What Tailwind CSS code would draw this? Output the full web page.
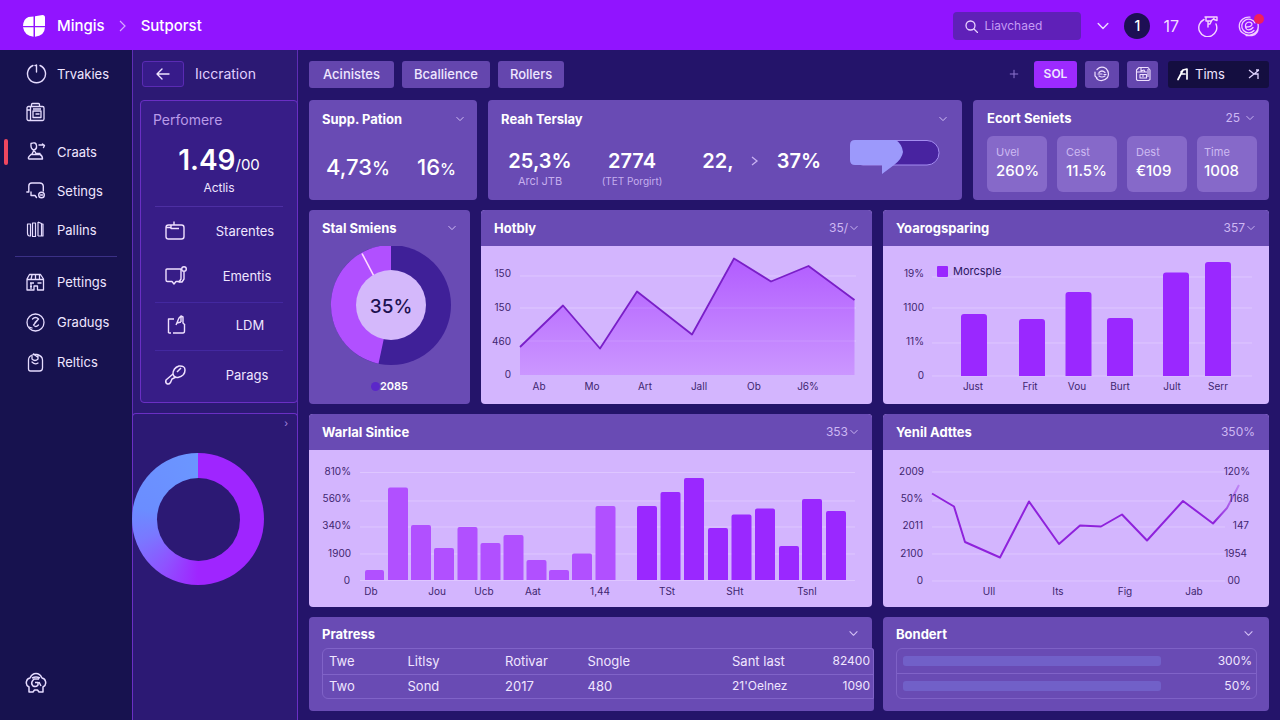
<!DOCTYPE html>
<html lang="en">
<head>
<meta charset="utf-8">
<meta name="viewport" content="width=device-width, initial-scale=1">
<title>Mingis – Sutporst</title>
<script src="https://cdn.jsdelivr.net/npm/@tailwindcss/browser@4"></script>
</head>
<body class="flex min-h-screen flex-col bg-[#24146a] font-['Inter','Noto_Sans',sans-serif] text-[13px] leading-4 text-[#efe6ff]">
<svg class="hidden" aria-hidden="true">
  <symbol id="down" viewBox="0 0 10 10"><path d="M1 3l4 4 4-4" fill="none" stroke="currentColor" stroke-width="1.2" stroke-linecap="round" stroke-linejoin="round"/></symbol>
</svg>

<header class="flex h-[50px] shrink-0 items-center bg-[#9114ff] pt-0.5 pr-5 pl-[23px]">
  <svg class="size-[23px]" viewBox="0 0 23 23" fill="#fff" aria-hidden="true">
    <path d="M10.500 1.500V11H0Q.5 3.500 5.500 2Z"/><path d="M12 1.200L19.500 0Q22 0 22 2.500V11H12Z"/><path d="M0 12.300H10.500V21.800Q1.500 21 0 12.300Z"/><path d="M12 12.300H22Q21.500 21 12 21.800Z"/>
  </svg>
  <nav class="ml-[11px] flex items-center text-[15px] font-medium leading-5 text-white" aria-label="Breadcrumb">
    <a href="#">Mingis</a>
    <svg class="mx-[14px] h-3 w-2" viewBox="0 0 8 12" fill="none" stroke="#d7a8ff" stroke-width="1.200"><path d="M1 1l5 5-5 5"/></svg>
    <a href="#">Sutporst</a>
  </nav>
  <label class="ml-auto flex h-7 w-32 items-center gap-1.5 rounded-[4px] bg-[#5f20b8] pl-3">
    <svg class="size-[13px] shrink-0" viewBox="0 0 13 13" fill="none" stroke="#e8d2ff" stroke-width="1.300" stroke-linecap="round"><circle cx="5.500" cy="5.500" r="4.500"/><path d="M9 9l3.500 3.500"/></svg>
    <input type="search" aria-label="Search" placeholder="Liavchaed" class="w-full min-w-0 bg-transparent text-xs text-white placeholder:text-[#c59bf5] focus:outline-none">
  </label>
  <button class="ml-4 text-[#ecd9ff]" aria-label="More"><svg class="size-3"><use href="#down"/></svg></button>
  <button class="ml-[15px] size-[26px] rounded-full bg-[#1d0f54] text-sm font-medium text-white">1</button>
  <span class="ml-[13px] text-base text-[#f3dcff]">17</span>
  <button class="ml-[18px]" aria-label="Timer">
    <svg class="size-[22px]" viewBox="0 0 22 22" fill="none" stroke="#f6d4ff" stroke-width="1.400" stroke-linecap="round" stroke-linejoin="round"><path d="M7 4.500A9 9 0 1 0 19 9"/><path d="M8 2h12v3.500l-3-1M9 2v4h5l3-2.500M11 6v6M15 5l-2 4h-2"/></svg>
  </button>
  <button class="relative ml-[19px]" aria-label="Notifications">
    <svg class="size-[22px]" viewBox="0 0 22 22" fill="none" stroke="#f3ccff" stroke-width="1.300" stroke-linecap="round"><path d="M12 2.200A9.500 9 0 1 0 20 9M20 9q1.500 10-6 11.500H8"/><path d="M17 8A7 6.800 0 1 0 16 15.500M8 12q6 0 6-3c-1-3.500-7-2-6.500 2.500s5 4 7.500 1"/></svg>
    <span class="absolute -top-px -right-1 size-[10px] rounded-full bg-[#f0205c]"></span>
  </button>
</header>

<div class="flex flex-1">
  <aside class="flex w-[132px] shrink-0 flex-col bg-[#17124f] pt-1 pb-[26px]">
    <nav class="flex flex-col" aria-label="Main">
      <a href="#" class="flex h-[39px] items-center gap-[10px] pl-[26px]">
        <svg class="size-[21px] shrink-0" viewBox="0 0 21 21" fill="none" stroke="#e6dcff" stroke-width="1.400" stroke-linecap="round"><path d="M7 2.500A9 9 0 1 0 14 2.500M10.500 2v7M9 2.500h1.500"/></svg>Trvakies</a>
      <a href="#" class="flex h-[39px] items-center gap-[10px] pl-[26px]" aria-label="Documents">
        <svg class="size-[21px] shrink-0" viewBox="0 0 21 21" fill="none" stroke="#e6dcff" stroke-width="1.300" stroke-linejoin="round"><rect x="1" y="4.500" width="17" height="14" rx="1.500"/><path d="M5.500 4.500v-2q0-1 1-1h6q1 0 1 1v2M4.500 4.500v14M7 9h8v6.500H7zM7 7h8M9.500 12h4M1 8h3.500"/></svg></a>
      <a href="#" class="relative flex h-[39px] items-center gap-[10px] pl-[26px]" aria-current="page">
        <span class="absolute left-1 h-[26px] w-[4px] rounded-[2px] bg-[#f0475f]"></span>
        <svg class="size-[21px] shrink-0" viewBox="0 0 21 21" fill="none" stroke="#e6dcff" stroke-width="1.400" stroke-linecap="round" stroke-linejoin="round"><path d="M5 2.500q5-2 5.500 2t-3 4.500q-3-1-2.500-6.500zM8 9l-2 4M8 9l2 3.500h4M5 13.500h9q2.500 1 2.500 4.500H3q-2-1 2-4.500zM13 4h5M16.500 3l2 1.500-1 2"/></svg>Craats</a>
      <a href="#" class="flex h-[39px] items-center gap-[10px] pl-[26px]">
        <svg class="size-[21px] shrink-0" viewBox="0 0 21 21" fill="none" stroke="#e6dcff" stroke-width="1.400" stroke-linecap="round" stroke-linejoin="round"><path d="M.8 12h2V6q0-3 3-3h8q3 0 3.500 3v5M5 12v3.500H9l1.500 2"/><circle cx="15.500" cy="15" r="2.800"/><path d="M14.500 15h2"/></svg>Setings</a>
      <a href="#" class="flex h-[39px] items-center gap-[10px] pl-[26px]">
        <svg class="size-[21px] shrink-0" viewBox="0 0 21 21" fill="none" stroke="#e6dcff" stroke-width="1.200" stroke-linejoin="round"><path d="M1.500 5h3v12H3.500q-2 0-2-3zM6.500 4H9.500v13.500H6.500zM12 3l3.500 1.500V17H12M12 3v14M15.500 5h1.500v12h-1.500"/></svg>Pallins</a>
      <hr class="mx-[15px] mt-[7px] mb-[5px] border-[#3b3086]">
      <a href="#" class="flex h-10 items-center gap-[10px] pl-[26px]">
        <svg class="size-[21px] shrink-0" viewBox="0 0 21 21" fill="none" stroke="#e6dcff" stroke-width="1.300" stroke-linejoin="round"><path d="M1 7l2.500-4.500h11L17.500 7v11h-6v-4H8v4H1zM1 7.500h16M6 3L5 7.500M9.500 2.500v5M13.500 3v4.500M4 11h4M11.500 11h4M4 14.500h2M5 11v6"/></svg>Pettings</a>
      <a href="#" class="flex h-10 items-center gap-[10px] pl-[26px]">
        <svg class="size-[21px] shrink-0" viewBox="0 0 21 21" fill="none" stroke="#e6dcff" stroke-width="1.300" stroke-linecap="round"><circle cx="9.500" cy="10.500" r="8.500"/><path d="M6.500 7q3-3 6 0l-5 6q2 3 5 0M12 7.500l-3 3M3 15l3 1"/></svg>Gradugs</a>
      <a href="#" class="flex h-10 items-center gap-[10px] pl-[26px]">
        <svg class="size-[21px] shrink-0" viewBox="0 0 21 21" fill="none" stroke="#e6dcff" stroke-width="1.300" stroke-linecap="round" stroke-linejoin="round"><path d="M2.500 17V8q0-4 5-5.500h3.500Q16.500 4 16.500 8v8q0 3-3 3H4.500q-2 0-2-2z"/><path d="M6 4v3q3 3 6 0V3M6 10q3 3 6 1M7.500 2l4 3"/></svg>Reltics</a>
    </nav>
    <button class="mt-auto ml-[25px] self-start" aria-label="Account">
      <svg class="size-[22px]" viewBox="0 0 22 22" fill="none" stroke="#e6dcff" stroke-width="1.500" stroke-linejoin="round"><path d="M4 20v-5Q.5 13 1.500 9.500 2 6.500 5 6 7 1.500 11 1.500T17 6q3 .5 3.500 3.500Q21.500 13 18 15v5h-4l-1.500-2h-3L8 20z"/><path d="M14 7H9q-4 4-1 7 3 1.500 5-1v-2.500h-3M14 10l2 4M7 6q4-2 8 0"/></svg>
    </button>
  </aside>

  <section class="flex w-[166px] shrink-0 flex-col border-x border-[#5f2db5] bg-[#2c1974]" aria-label="Overview">
    <div class="flex h-[50px] items-center gap-[11px] pb-0.5 pl-[9px]">
      <button class="flex h-[26px] w-[42px] items-center justify-center rounded-[3px] border border-[#5a2bb4] bg-[#371b8a]" aria-label="Back">
        <svg class="h-3 w-4" viewBox="0 0 16 12" fill="none" stroke="#efe6ff" stroke-width="1.400" stroke-linecap="round" stroke-linejoin="round"><path d="M14 6H2M7 1L2 6l5 5"/></svg>
      </button>
      <span class="text-sm leading-4 text-[#e0d0ff]">Iıccration</span>
    </div>
    <div class="-mr-px ml-[7px] flex flex-col rounded-[4px] border border-[#6a2fc4] bg-[#371d87] px-[14px] pb-1">
      <h2 class="-ml-0.5 pt-[11px] text-sm leading-4 text-[#b99ae8]">Perfomere</h2>
      <p class="mt-4 flex items-baseline justify-center text-white"><span class="text-[28px] font-semibold leading-8">1.49</span><span class="text-[15px]">/00</span></p>
      <p class="mt-1 mb-[10px] text-center text-xs leading-4">Actlis</p>
      <ul class="flex flex-col">
        <li class="flex h-12 items-center border-t border-[#4d2fa3]">
          <svg class="ml-2 size-6" viewBox="0 0 24 24" fill="none" stroke="#efe0ff" stroke-width="1.400" stroke-linejoin="round"><rect x="3" y="6" width="18" height="14" rx="2.500"/><path d="M8 6v3.500h8M11 6V2.500M3 8.500h5"/></svg>
          <span class="flex-1 pl-5 text-center">Starentes</span></li>
        <li class="flex h-12 items-center pb-1">
          <svg class="ml-2 size-6" viewBox="0 0 24 24" fill="none" stroke="#efe0ff" stroke-width="1.400" stroke-linejoin="round"><path d="M18 5H4q-1 0-1 1v10q0 1.500 1.500 1.500H9l2 2.500 2-2.500h4"/><circle cx="21" cy="5" r="2.300"/><path d="M18 5v10l-2 3h3l2-3V8"/></svg>
          <span class="flex-1 pl-6 text-center">Ementis</span></li>
        <li class="flex h-12 items-center border-t border-[#4328a0] pb-1">
          <svg class="ml-2 size-6" viewBox="0 0 24 24" fill="none" stroke="#efe0ff" stroke-width="1.400" stroke-linejoin="round"><path d="M11 6H5.500v14M5.500 20H8M10 20h10q1.500 0 1.500-2v-7M13 12l3-7 2-2 2 1v6l2 2M14 10l4-1M18 4v5"/></svg>
          <span class="flex-1 pl-[30px] text-center">LDM</span></li>
        <li class="flex h-12 items-center border-t border-[#4328a0]">
          <svg class="ml-2 size-6" viewBox="0 0 24 24" fill="none" stroke="#efe0ff" stroke-width="1.500" stroke-linejoin="round"><path d="M10 11q0-6 6-8 6-.5 6 4 0 6-7 7.500-4 .5-5-3.500z"/><path d="M10 11l-7 6q-1 3 1.500 4 1.500.5 3-1.500L9 16l4-2M14 9l4-4"/></svg>
          <span class="flex-1 pl-6 text-center">Parags</span></li>
      </ul>
    </div>
    <div class="-mx-px mt-[10px] flex flex-1 flex-col rounded-t-[4px] border border-b-0 border-[#6a2fc4] bg-[#2c1974]">
      <button class="mt-[3px] mr-[9px] self-end text-[10px] leading-3 text-[#a98ae0]" aria-label="Open chart">›</button>
      <div class="mt-6 -ml-px flex size-[132px] items-center justify-center rounded-full bg-[conic-gradient(#9f25ff_0deg,#9f25ff_180deg,#8f52ff_215deg,#7a78ff_250deg,#6b8dff_280deg,#6b96ff_360deg)]" role="img" aria-label="Ring chart">
        <div class="size-[83px] rounded-full bg-[#2c1974]"></div>
      </div>
    </div>
  </section>

  <main class="flex min-w-0 flex-1 flex-col gap-[10px] pr-[11px] pb-[9px] pl-[11px]">
    <div class="-mb-[10px] flex h-[50px] items-center pb-0.5">
      <div class="flex gap-2">
        <button class="h-[27px] rounded-[3px] bg-[#6446ae] px-[14px] font-medium">Acinistes</button>
        <button class="h-[27px] rounded-[3px] bg-[#6446ae] px-3 font-medium">Bcallience</button>
        <button class="h-[27px] rounded-[3px] bg-[#6446ae] px-3 font-medium">Rollers</button>
      </div>
      <div class="ml-auto flex items-center gap-2">
        <button class="mr-[7px] text-[#8d75cf]" aria-label="Add"><svg class="size-[10px]" viewBox="0 0 12 12" fill="none" stroke="currentColor" stroke-width="1.200"><path d="M6 1v10M1 6h10"/></svg></button>
        <button class="h-[27px] w-[43px] rounded-[3px] bg-[#9d2aff] text-xs font-semibold">SOL</button>
        <button class="flex h-[27px] w-[34px] items-center justify-center rounded-[3px] bg-[#6446ae]" aria-label="History">
          <svg class="size-4" viewBox="0 0 16 16" fill="none" stroke="#efe0ff" stroke-width="1.200" stroke-linecap="round"><path d="M3 3.500q4-4 9-1 4 4 1.500 9-4 4.500-9 2.500l-2-1.500M1 6v4l2 2"/><path d="M5 6.500q3-3 6 0M5 10q3 2 6 0M4 8h4M10 8.500h2"/></svg></button>
        <button class="flex h-[27px] w-[31px] items-center justify-center rounded-[3px] bg-[#6446ae]" aria-label="Save">
          <svg class="size-4" viewBox="0 0 16 16" fill="none" stroke="#efe0ff" stroke-width="1.100" stroke-linejoin="round"><path d="M4 1.500h9L15 4v9.500l-1.500 1H2.500l-1-1V4zM1.500 6H12M6 2v3l3-1 1 2M5 8.500h6.500V12H5zM8 8.500V11M13 3v8"/></svg></button>
        <button class="ml-0.5 flex h-[27px] w-[101px] items-center rounded-[3px] bg-[#140e40] px-[9px]">
          <svg class="mr-1.5 h-3.5 w-3" viewBox="0 0 12 14" fill="none" stroke="#fff" stroke-width="1.700" stroke-linecap="round" stroke-linejoin="round"><path d="M1 12.500L6 3l4-1v10M4 7h4M6 3L4 5"/></svg>
          Tims
          <svg class="ml-auto size-3" viewBox="0 0 12 12" fill="none" stroke="#e0d4ff" stroke-width="1.300"><path d="M1 2l5 4-5 4M11 2L6 6h4v5M11 2H8"/></svg>
        </button>
      </div>
    </div>

    <div class="grid grid-cols-[168fr_474fr_296fr] gap-x-[11px]">
      <section class="h-[100px] rounded-[4px] bg-[#694bb4] px-[13px] text-white">
        <div class="flex h-[38px] items-center justify-between"><h2 class="font-bold">Supp. Pation</h2><button class="text-[#d5c2f7]" aria-label="Expand"><svg class="size-2"><use href="#down"/></svg></button></div>
        <div class="mt-[13px] flex items-baseline justify-between pr-2 pl-1 text-[22px] font-medium leading-8"><span>4,73<span class="text-lg">%</span></span><span>16<span class="text-base">%</span></span></div>
      </section>
      <section class="h-[100px] rounded-[4px] bg-[#694bb4] text-white">
        <div class="flex h-[38px] items-center justify-between pr-[15px] pl-[13px]"><h2 class="font-bold">Reah Terslay</h2><button class="text-[#d5c2f7]" aria-label="Expand"><svg class="size-2"><use href="#down"/></svg></button></div>
        <div class="grid grid-cols-[104fr_80fr_20fr_52fr_22fr_66fr_18fr_90fr_22fr] text-center text-xl font-semibold leading-6">
          <div class="pt-[11px]">25,3%<p class="text-[11px] font-normal leading-4 text-[#c6afee]">Arcl JTB</p></div>
          <div class="pt-[11px]">2774<p class="text-[10px] font-normal leading-4 whitespace-nowrap text-[#c6afee]">(TET Porgirt)</p></div>
          <div></div>
          <div class="pt-[11px]">22,</div>
          <svg class="mt-[17px] h-3 w-2 justify-self-center" viewBox="0 0 8 12" fill="none" stroke="#c9b2f2" stroke-width="1.300"><path d="M1 2l5 4-5 4"/></svg>
          <div class="pt-[11px]">37%</div>
          <div></div>
          <svg class="mt-0.5 h-auto w-full" viewBox="0 0 90 34" role="img" aria-label="Progress"><rect x="1" y=".500" width="88" height="24.500" rx="12" fill="#4823a0" stroke="#a48df0"/><path d="M5 0h41q6 4 7 12-1 7-9 13L32 34V25H5Q0 25 0 20V5Q0 0 5 0z" fill="#9c99fb"/></svg>
          <div></div>
        </div>
      </section>
      <section class="h-[100px] rounded-[4px] bg-[#694bb4] pr-3 pl-[14px] text-white">
        <div class="flex h-9 items-center justify-between"><h2 class="font-bold">Ecort Seniets</h2><button class="flex items-center gap-1.5 pr-[3px] text-xs text-[#cdb8f3]">25<svg class="size-2"><use href="#down"/></svg></button></div>
        <dl class="grid grid-cols-4 gap-x-[10px]">
          <div class="h-14 rounded-[6px] bg-[#8669c9] pt-2 pl-[9px]"><dt class="text-[11px] leading-4 text-[#cdbaf2]">Uvel</dt><dd class="pt-px text-[15px] font-medium leading-5">260%</dd></div>
          <div class="h-14 rounded-[6px] bg-[#8669c9] pt-2 pl-[9px]"><dt class="text-[11px] leading-4 text-[#cdbaf2]">Cest</dt><dd class="pt-px text-[15px] font-medium leading-5">11.5%</dd></div>
          <div class="h-14 rounded-[6px] bg-[#8669c9] pt-2 pl-[9px]"><dt class="text-[11px] leading-4 text-[#cdbaf2]">Dest</dt><dd class="pt-px text-[15px] font-medium leading-5">€109</dd></div>
          <div class="h-14 rounded-[6px] bg-[#8669c9] pt-2 pl-[7px]"><dt class="text-[11px] leading-4 text-[#cdbaf2]">Time</dt><dd class="pt-px text-[15px] font-medium leading-5">1008</dd></div>
        </dl>
      </section>
    </div>

    <div class="grid grid-cols-[161fr_391fr_386fr] gap-x-[11px]">
      <section class="flex flex-col rounded-[4px] bg-[#694bb4] text-white">
        <div class="flex h-9 items-center justify-between pr-[14px] pl-[13px]"><h2 class="font-bold">Stal Smiens</h2><button class="text-[#d5c2f7]" aria-label="Expand"><svg class="size-2"><use href="#down"/></svg></button></div>
        <svg class="h-auto w-full" viewBox="309 246 161 120" role="img" aria-label="35%">
          <circle cx="391" cy="305" r="60" fill="#3f2098"/>
          <path d="M391 305V245A60 60 0 0 0 378.500 363.700Z" fill="#b150ff"/>
          <path d="M362 253.500L376 280" stroke="#ffdcff" stroke-width="1.600"/>
          <circle cx="391" cy="305" r="35" fill="#d4b8fb"/>
          <text x="391" y="313" text-anchor="middle" font-size="19" font-weight="500" fill="#1c1150">35%</text>
        </svg>
        <p class="mt-3 flex items-center justify-center text-[11px] font-semibold leading-4"><span class="size-[9px] rounded-full bg-[#5b27c9]"></span>2085</p>
      </section>

      <section class="overflow-hidden rounded-[4px] bg-[#d3b5fe]">
        <div class="flex h-9 items-center justify-between bg-[#694bb4] pr-[14px] pl-[13px] text-white"><h2 class="font-bold">Hotbly</h2><button class="flex items-center gap-0.5 text-xs text-[#cdb8f3]">35/<svg class="size-2"><use href="#down"/></svg></button></div>
        <svg class="h-auto w-full" viewBox="481 246 391 158" font-size="10" fill="#40256f" role="img" aria-label="Area chart">
          <defs><linearGradient id="area" x1="0" y1="0" x2="0" y2="1"><stop offset="0" stop-color="#b25cff"/><stop offset="1" stop-color="#cb97ff"/></linearGradient></defs>
          <path d="M520 276H856M520 308H856M520 341H856" stroke="#deC6ff"/>
          <path d="M520 347L563 305.500 600 348.500 637 291.500 692 334.500 734 258.500 771 281.500 808.500 266 854.500 300V375H520Z" fill="url(#area)"/>
          <path d="M520 308H856M520 341H856" stroke="#e0c8ff" stroke-opacity=".250"/>
          <path d="M520 347L563 305.500 600 348.500 637 291.500 692 334.500 734 258.500 771 281.500 808.500 266 854.500 300" fill="none" stroke="#7a1fc8" stroke-width="1.800" stroke-linejoin="round"/>
          <g text-anchor="end"><text x="511" y="277">150</text><text x="511" y="311">150</text><text x="511" y="345">460</text><text x="511" y="378">0</text></g>
          <g text-anchor="middle"><text x="539" y="390">Ab</text><text x="592" y="390">Mo</text><text x="645" y="390">Art</text><text x="699" y="390">Jall</text><text x="754" y="390">Ob</text><text x="808" y="390">J6%</text></g>
        </svg>
      </section>

      <section class="overflow-hidden rounded-[4px] bg-[#d3b5fe]">
        <div class="flex h-9 items-center justify-between bg-[#694bb4] pr-[14px] pl-[13px] text-white"><h2 class="font-bold">Yoarogsparing</h2><button class="flex items-center gap-0.5 text-xs text-[#cdb8f3]">357<svg class="size-2"><use href="#down"/></svg></button></div>
        <svg class="h-auto w-full" viewBox="883 246 386 156" font-size="10" fill="#40256f" role="img" aria-label="Bar chart">
          <path d="M932 277H1252M932 308H1252M932 343H1252M932 376H1252" stroke="#dec6ff"/>
          <g fill="#9a28ff"><rect x="937" y="266" width="11" height="11" rx="1"/>
          <path d="M961 376V317q0-3 3-3h20q3 0 3 3v59zM1019 376V322q0-3 3-3h20q3 0 3 3v54zM1065.500 376V295q0-3 3-3h20q3 0 3 3v81zM1107 376V321q0-3 3-3h20q3 0 3 3v55zM1163 376V275.500q0-3 3-3h20q3 0 3 3V376zM1205 376V265q0-3 3-3h20q3 0 3 3v111z"/></g>
          <text x="953" y="275" font-size="11" fill="#2a1560">Morcsple</text>
          <g text-anchor="end"><text x="924" y="277">19%</text><text x="924" y="311">1100</text><text x="924" y="345">11%</text><text x="924" y="379">0</text></g>
          <g text-anchor="middle"><text x="973" y="390">Just</text><text x="1030" y="390">Frit</text><text x="1077" y="390">Vou</text><text x="1120" y="390">Burt</text><text x="1172" y="390">Jult</text><text x="1218" y="390">Serr</text></g>
        </svg>
      </section>
    </div>

    <div class="grid grid-cols-[563fr_386fr] gap-x-[11px]">
      <section class="overflow-hidden rounded-[4px] bg-[#d3b5fe]">
        <div class="flex h-9 items-center justify-between bg-[#694bb4] pr-[14px] pl-[13px] text-white"><h2 class="font-bold">Warlal Sintice</h2><button class="flex items-center gap-0.5 text-xs text-[#cdb8f3]">353<svg class="size-2"><use href="#down"/></svg></button></div>
        <svg class="h-auto w-full" viewBox="309 450 563 157" font-size="10" fill="#40256f" role="img" aria-label="Bar chart">
          <path d="M360 472.500H855M360 501H855M360 527H855M360 554H855M360 580.500H855" stroke="#dec6ff"/>
          <path fill="#b150ff" d="M365 580V572q0-2 2-2h15q2 0 2 2v8zM388 580V489.500q0-2 2-2h16q2 0 2 2V580zM411 580V527q0-2 2-2h16q2 0 2 2v53zM434 580V550q0-2 2-2h16q2 0 2 2v30zM457.500 580V529q0-2 2-2h16q2 0 2 2v51zM480.500 580V545q0-2 2-2h16q2 0 2 2v35zM503.500 580V537q0-2 2-2h16q2 0 2 2v43zM526.500 580V562q0-2 2-2h16q2 0 2 2v18zM549 580V572q0-2 2-2h16q2 0 2 2v8zM572 580V555.500q0-2 2-2h16q2 0 2 2V580zM595.500 580V508q0-2 2-2h16q2 0 2 2v72z"/>
          <path fill="#9a28ff" d="M637 580V508q0-2 2-2h16q2 0 2 2v72zM660.500 580V494q0-2 2-2h16q2 0 2 2v86zM684 580V480q0-2 2-2h16q2 0 2 2V580zM708 580V530q0-2 2-2h16q2 0 2 2v50zM731.500 580V516.500q0-2 2-2h16q2 0 2 2V580zM755 580V510.500q0-2 2-2h16q2 0 2 2V580zM779 580V548q0-2 2-2h16q2 0 2 2v32zM802 580V501q0-2 2-2h16q2 0 2 2v79zM826 580V513q0-2 2-2h16q2 0 2 2v67z"/>
          <g text-anchor="end"><text x="351" y="475">810%</text><text x="351" y="502">560%</text><text x="351" y="529">340%</text><text x="351" y="557">1900</text><text x="350" y="584">0</text></g>
          <g text-anchor="middle"><text x="371" y="595">Db</text><text x="437" y="595">Jou</text><text x="484" y="595">Ucb</text><text x="533" y="595">Aat</text><text x="600" y="595">1,44</text><text x="667" y="595">TSt</text><text x="735" y="595">SHt</text><text x="807" y="595">Tsnl</text></g>
        </svg>
      </section>

      <section class="overflow-hidden rounded-[4px] bg-[#d3b5fe]">
        <div class="flex h-9 items-center justify-between bg-[#694bb4] pr-[14px] pl-[13px] text-white"><h2 class="font-bold">Yenil Adttes</h2><button class="text-xs text-[#cdb8f3]">350%</button></div>
        <svg class="h-auto w-full" viewBox="883 450 386 156" font-size="10" fill="#40256f" role="img" aria-label="Line chart">
          <defs><linearGradient id="fade" gradientUnits="userSpaceOnUse" x1="1215" y1="0" x2="1240" y2="0"><stop offset="0" stop-color="#8f22dc"/><stop offset="1" stop-color="#c08af5"/></linearGradient></defs>
          <path d="M932 472H1225M932 501H1225M932 527H1225M932 554H1225M932 581H1225" stroke="#dec6ff"/>
          <path d="M932 493.500L954 506.500 965 542 1000 557.500 1029 501.500 1059 544 1080 525.500 1101 526.500 1122 514.500 1147 540.500 1183 501 1213 523.500 1227 508 1239 485" fill="none" stroke="url(#fade)" stroke-width="2" stroke-linejoin="round"/>
          <g text-anchor="end"><text x="924" y="475">2009</text><text x="923" y="502">50%</text><text x="923" y="529">2011</text><text x="923" y="557">2100</text><text x="923" y="584">0</text></g>
          <g text-anchor="end"><text x="1250" y="475">120%</text><text x="1249" y="502">1168</text><text x="1249" y="529">147</text><text x="1247" y="557">1954</text><text x="1240" y="584">00</text></g>
          <g text-anchor="middle"><text x="989" y="595">Ull</text><text x="1058" y="595">Its</text><text x="1125" y="595">Fig</text><text x="1194" y="595">Jab</text></g>
        </svg>
      </section>
    </div>

    <div class="grid grid-cols-[563fr_386fr] gap-x-[11px]">
      <section class="flex h-[94px] flex-col rounded-[4px] bg-[#694bb4] text-white">
        <div class="flex h-[31px] shrink-0 items-center justify-between pt-0.5 pr-[14px] pl-[13px]"><h2 class="font-bold">Pratress</h2><button class="text-[#d5c2f7]" aria-label="Expand"><svg class="size-[9px]"><use href="#down"/></svg></button></div>
        <div class="-mr-0.5 ml-[13px] flex-1 rounded-r-[3px] bg-[#694bb4]">
          <div class="rounded-l-[6px] rounded-tr-[3px] border border-[#8063c8]">
          <table class="w-full table-fixed text-[13px] leading-4 text-[#f0e6ff]">
            <colgroup><col class="w-[15%]"><col class="w-[17%]"><col class="w-[15%]"><col class="w-[27%]"><col class="w-[13%]"><col class="w-[13%]"></colgroup>
            <tbody>
              <tr class="h-[25px] border-b border-[#8063c8]"><td class="pl-[6px]">Twe</td><td class="pl-0.5">Litlsy</td><td class="pl-1.5">Rotivar</td><td class="pl-1.5">Snogle</td><td class="pl-0.5 whitespace-nowrap">Sant last</td><td class="pr-[3px] text-right text-xs">82400</td></tr>
              <tr class="h-6"><td class="pl-[6px]">Two</td><td class="pl-0.5">Sond</td><td class="pl-1.5">2017</td><td class="pl-1.5">480</td><td class="pl-0.5 text-xs whitespace-nowrap">21'Oelnez</td><td class="pr-[3px] text-right text-xs">1090</td></tr>
            </tbody>
          </table>
          </div>
        </div>
      </section>
      <section class="h-[94px] rounded-[4px] bg-[#694bb4] text-white">
        <div class="flex h-[31px] items-center justify-between pt-0.5 pr-4 pl-[13px]"><h2 class="font-bold">Bondert</h2><button class="text-[#d5c2f7]" aria-label="Expand"><svg class="size-[9px]"><use href="#down"/></svg></button></div>
        <div class="mr-3 ml-[13px] rounded-[6px] border border-[#7e61c6] text-xs text-[#f0e6ff]">
          <div class="flex h-[25px] items-center justify-between border-b border-[#8063c8] pr-1 pl-[6px]"><div class="h-[10px] w-[74%] rounded-[3px] bg-[#7160c8]" role="progressbar" aria-label="First" aria-valuenow="74"></div><span>300%</span></div>
          <div class="flex h-6 items-center justify-between pr-[5px] pl-[6px]"><div class="h-[10px] w-[74%] rounded-[3px] bg-[#7160c8]" role="progressbar" aria-label="Second" aria-valuenow="74"></div><span>50%</span></div>
        </div>
      </section>
    </div>
  </main>
</div>
</body>
</html>
